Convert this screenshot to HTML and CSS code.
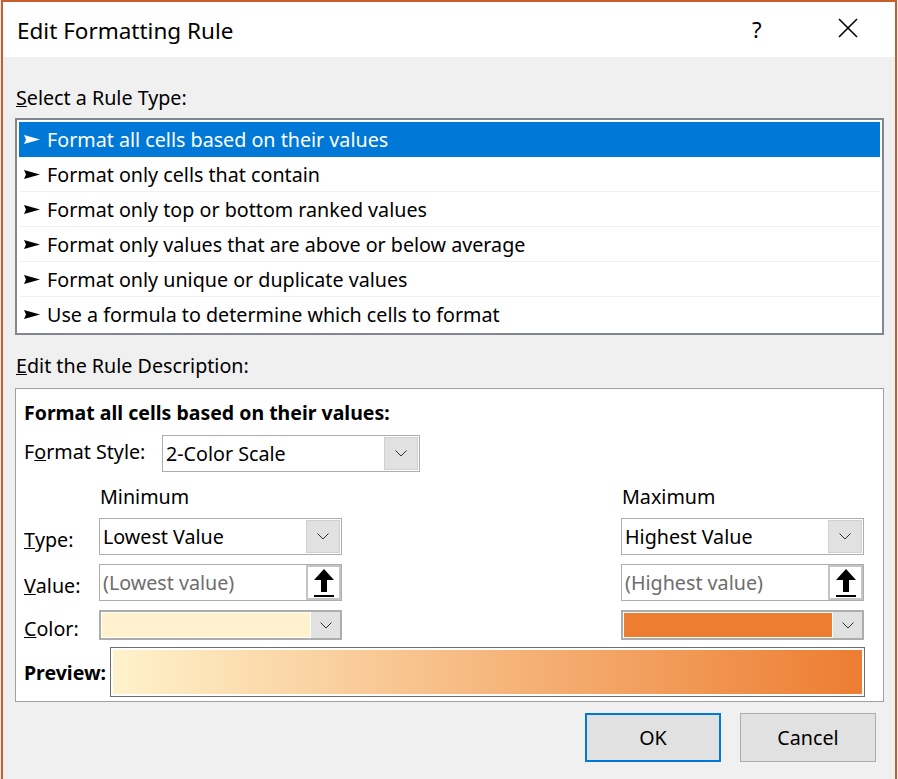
FILE: index.html
```html
<!DOCTYPE html>
<html>
<head>
<meta charset="utf-8">
<link rel="stylesheet" href="styles.css">
</head>
<body>
<div class="dialog">
  <div class="titlebar">
    <span class="title">Edit Formatting Rule</span>
    <span class="help">?</span>
    <span class="close"><svg width="20" height="20" viewBox="0 0 20 20"><path d="M1 1L19 19M19 1L1 19" stroke="#000" stroke-width="1.6" fill="none"/></svg></span>
  </div>
  <div class="content">
    <div class="label sec1"><u>S</u>elect a Rule Type:</div>
    <div class="listbox">
      <div class="row sel"><svg class="arr" width="16" height="9" viewBox="0 0 16 9"><path d="M0 0L16 4.5L0 9L2 4.5Z" fill="#fff"/></svg>Format all cells based on their values</div>
      <div class="row"><svg class="arr" width="16" height="9" viewBox="0 0 16 9"><path d="M0 0L16 4.5L0 9L2 4.5Z" fill="#000"/></svg>Format only cells that contain</div>
      <div class="row"><svg class="arr" width="16" height="9" viewBox="0 0 16 9"><path d="M0 0L16 4.5L0 9L2 4.5Z" fill="#000"/></svg>Format only top or bottom ranked values</div>
      <div class="row"><svg class="arr" width="16" height="9" viewBox="0 0 16 9"><path d="M0 0L16 4.5L0 9L2 4.5Z" fill="#000"/></svg>Format only values that are above or below average</div>
      <div class="row"><svg class="arr" width="16" height="9" viewBox="0 0 16 9"><path d="M0 0L16 4.5L0 9L2 4.5Z" fill="#000"/></svg>Format only unique or duplicate values</div>
      <div class="row last"><svg class="arr" width="16" height="9" viewBox="0 0 16 9"><path d="M0 0L16 4.5L0 9L2 4.5Z" fill="#000"/></svg>Use a formula to determine which cells to format</div>
    </div>
    <div class="label sec2"><u>E</u>dit the Rule Description:</div>
    <div class="desc">
      <div class="heading">Format all cells based on their values:</div>
      <div class="stylerow">
        <span class="stylelabel">F<u>o</u>rmat Style:</span>
        <div class="combo combo-style"><span class="ctext">2-Color Scale</span><span class="cbtn"><svg width="12" height="7" viewBox="0 0 12 7"><path d="M0.5 0.5L6 6L11.5 0.5" stroke="#333" stroke-width="1" fill="none"/></svg></span></div>
      </div>
      <div class="grid">
        <div></div>
        <div class="colhead">Minimum</div>
        <div></div>
        <div class="colhead">Maximum</div>

        <div class="rlabel"><u>T</u>ype:</div>
        <div class="combo"><span class="ctext">Lowest Value</span><span class="cbtn"><svg width="12" height="7" viewBox="0 0 12 7"><path d="M0.5 0.5L6 6L11.5 0.5" stroke="#333" stroke-width="1" fill="none"/></svg></span></div>
        <div></div>
        <div class="combo"><span class="ctext">Highest Value</span><span class="cbtn"><svg width="12" height="7" viewBox="0 0 12 7"><path d="M0.5 0.5L6 6L11.5 0.5" stroke="#333" stroke-width="1" fill="none"/></svg></span></div>

        <div class="rlabel"><u>V</u>alue:</div>
        <div class="input"><span class="ptext">(Lowest value)</span><span class="ibtn"><svg width="22" height="30" viewBox="0 0 22 30"><path d="M11 1L21 12H14V24H8V12H1Z" fill="#000"/><rect x="1" y="27" width="20" height="2" fill="#000"/></svg></span></div>
        <div></div>
        <div class="input"><span class="ptext">(Highest value)</span><span class="ibtn"><svg width="22" height="30" viewBox="0 0 22 30"><path d="M11 1L21 12H14V24H8V12H1Z" fill="#000"/><rect x="1" y="27" width="20" height="2" fill="#000"/></svg></span></div>

        <div class="rlabel"><u>C</u>olor:</div>
        <div class="colorcombo"><span class="swatch swatch-min"></span><span class="cbtn2"><svg width="12" height="7" viewBox="0 0 12 7"><path d="M0.5 0.5L6 6L11.5 0.5" stroke="#333" stroke-width="1" fill="none"/></svg></span></div>
        <div></div>
        <div class="colorcombo"><span class="swatch swatch-max"></span><span class="cbtn2"><svg width="12" height="7" viewBox="0 0 12 7"><path d="M0.5 0.5L6 6L11.5 0.5" stroke="#333" stroke-width="1" fill="none"/></svg></span></div>
      </div>
      <div class="previewrow">
        <span class="plabel">Preview:</span>
        <div class="pbox"><div class="pgrad"></div></div>
      </div>
    </div>
    <div class="buttons">
      <div class="btn ok">OK</div>
      <div class="btn">Cancel</div>
    </div>
  </div>
</div>
</body>
</html>
```

FILE: styles.css
```css
html, body {
  margin: 0;
  padding: 0;
}
body {
  width: 898px;
  height: 779px;
  overflow: hidden;
  background: #ececec;
  font-family: "Noto Sans", "Open Sans", sans-serif;
  color: #000;
}
.dialog {
  margin-left: 1px;
  width: 892px;
  height: 777px;
  border: 2px solid #c95e2c;
  border-bottom: none;
  background: #f0f0f0;
}
.titlebar {
  height: 55px;
  background: #fff;
  display: flex;
  align-items: center;
}
.title {
  font-size: 22.5px;
  margin-left: 14px;
  flex: 1;
  padding-top: 2px;
}
.help {
  font-size: 22px;
  width: 20px;
  margin-right: 66px;
  padding-bottom: 2px;
}
.close {
  display: flex;
  margin-right: 37px;
  padding-bottom: 4px;
}
.content {
  padding: 0 11px 0 12px;
}
.label {
  font-size: 19.7px;
  padding-left: 1px;
  line-height: 26px;
}
.sec1 {
  padding-top: 28px;
  height: 33px;
}
.sec2 {
  padding-top: 18px;
  height: 35px;
}
.listbox {
  border: 2px solid #82878f;
  background: #fff;
  padding: 2px 2px 0 2px;
  height: 211px;
}
.row {
  height: 34px;
  border-bottom: 1px solid #f0f0f0;
  display: flex;
  align-items: center;
  font-size: 19.7px;
  padding-left: 5px;
}
.row.last {
  border-bottom: none;
}
.row.sel {
  background: #0078d7;
  color: #fff;
  border-bottom-color: #0078d7;
}
.arr {
  margin-right: 7px;
  margin-top: 1px;
}
.desc {
  border: 1px solid #a0a0a0;
  background: #fff;
  height: 312px;
  padding-left: 8px;
}
.heading {
  font-weight: bold;
  font-size: 19.5px;
  padding-top: 11px;
  height: 35px;
  line-height: 26px;
}
.stylerow {
  display: flex;
  align-items: center;
  height: 37px;
}
.stylelabel {
  font-size: 19.7px;
  width: 138px;
  padding-bottom: 4px;
}
.combo {
  border: 1px solid #adadad;
  background: #fff;
  height: 35px;
  display: flex;
  align-items: center;
  padding: 0 1px 0 3px;
}
.combo-style {
  width: 252px;
}
.ctext {
  flex: 1;
  font-size: 19.7px;
}
.cbtn {
  width: 32px;
  height: 31px;
  background: #e1e1e1;
  border: 1px solid #d0d0d0;
  display: flex;
  align-items: center;
  justify-content: center;
}
.grid {
  display: grid;
  grid-template-columns: 75px 243px 279px 243px;
  grid-template-rows: 46px 37px 9px 37px 9px 30px;
}
.grid > :nth-child(n+5):nth-child(-n+8) { grid-row: 2; }
.grid > :nth-child(n+9):nth-child(-n+12) { grid-row: 4; }
.grid > :nth-child(n+13) { grid-row: 6; }
.colhead {
  font-size: 19.7px;
  padding-left: 1px;
  line-height: 26px;
  padding-top: 12px;
}
.rlabel {
  font-size: 19.7px;
  display: flex;
  align-items: center;
  padding-top: 6px;
}
.input {
  border: 1px solid #adadad;
  background: #fff;
  display: flex;
  align-items: center;
  padding-left: 3px;
}
.ptext {
  flex: 1;
  color: #6d6d6d;
  font-size: 19.7px;
}
.ibtn {
  width: 31px;
  height: 31px;
  border: 2px solid #c4c4c4;
  background: #fff;
  display: flex;
  align-items: center;
  justify-content: center;
}
.colorcombo {
  border: 2px solid #adadad;
  background: #fff;
  display: flex;
  padding: 0;
}
.swatch {
  flex: 1;
  margin: 1px;
}
.swatch-min { background: #fff2cc; }
.swatch-max { background: #ed7d31; }
.cbtn2 {
  width: 29px;
  background: #e1e1e1;
  display: flex;
  align-items: center;
  justify-content: center;
}
.previewrow {
  display: flex;
  align-items: center;
  margin-top: 7px;
}
.plabel {
  font-weight: bold;
  font-size: 19.5px;
  width: 86px;
}
.pbox {
  width: 749px;
  height: 44px;
  border: 1px solid #6e6e6e;
  padding: 2px;
  background: #fff;
}
.pgrad {
  height: 100%;
  background: linear-gradient(to right, #fff2cc, #ed7d31);
}
.buttons {
  display: flex;
  justify-content: flex-end;
  gap: 19px;
  padding-top: 11px;
  padding-right: 8px;
}
.btn {
  width: 134px;
  height: 47px;
  border: 1px solid #adadad;
  background: #e1e1e1;
  display: flex;
  align-items: center;
  justify-content: center;
  font-size: 19.7px;
}
.btn.ok {
  border: 2px solid #0078d7;
  width: 132px;
  height: 45px;
}
```
